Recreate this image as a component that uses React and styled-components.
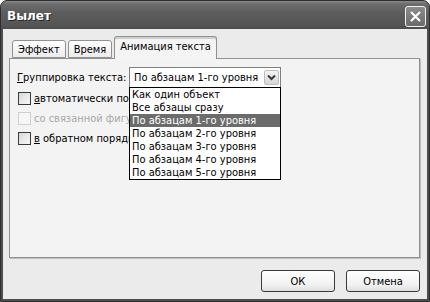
import styled, { createGlobalStyle } from "styled-components";

const GlobalStyle = createGlobalStyle`
  html, body {
    margin: 0;
    padding: 0;
    background: #ffffff;
  }
  body {
    font-family: "DejaVu Sans Condensed", "DejaVu Sans", sans-serif;
    font-size: 11px;
    color: #000;
  }
`;

const Frame = styled.div`
  width: 430px;
  height: 302px;
  box-sizing: border-box;
  display: flex;
  flex-direction: column;
  background: #4e4e4e;
  border-radius: 7px 7px 0 0;
  border: 1px solid #2e2e2e;
  overflow: hidden;
`;

const TitleBar = styled.div`
  height: 28px;
  flex-shrink: 0;
  display: flex;
  align-items: center;
  justify-content: space-between;
  padding: 0 3px 0 6px;
  background: linear-gradient(#8a8a8a 0px, #6c6c6c 3px, #5c5c5c 12px, #555555 24px, #4c4c4c 28px);
`;

const Title = styled.span`
  font-family: "DejaVu Sans", sans-serif;
  font-weight: bold;
  font-size: 12px;
  color: #ffffff;
  text-shadow: 1px 1px 0 #2a2a2a;
  margin-top: 2px;
`;

const CloseButton = styled.div`
  width: 19px;
  height: 19px;
  border: 1px solid #f2f2f2;
  border-radius: 3px;
  background: linear-gradient(#8c8c8c, #6a6a6a);
  display: flex;
  align-items: center;
  justify-content: center;
  margin-top: 2px;
`;

const Body = styled.div`
  flex: 1;
  margin: 0 2px 2px 2px;
  background: #ebebeb;
  display: flex;
  flex-direction: column;
  padding: 7px 7px 0 6px;
`;

const TabRow = styled.div`
  display: flex;
  align-items: flex-end;
  padding-left: 3px;
  height: 22px;
  position: relative;
  z-index: 1;
`;

const Tab = styled.div`
  box-sizing: border-box;
  height: ${(p) => (p.$active ? "23px" : "18px")};
  padding: ${(p) => (p.$active ? "3px 5px 0" : "2px 5px 0")};
  margin-right: ${(p) => (p.$active ? "0" : "2px")};
  margin-bottom: ${(p) => (p.$active ? "-1px" : "0")};
  border: 1px solid #919191;
  border-bottom: ${(p) => (p.$active ? "none" : "1px solid #919191")};
  border-radius: 3px 3px 0 0;
  background: ${(p) => (p.$active ? "#f4f4f4" : "linear-gradient(#ffffff, #ececec)")};
  box-shadow: ${(p) => (p.$active ? "inset 0 2px 0 #cfcfcf" : "none")};
  white-space: nowrap;
`;

const Panel = styled.div`
  height: 200px;
  box-sizing: border-box;
  background: #f3f3f3;
  border: 1px solid #919191;
  box-shadow: 1px 1px 0 #bdbdbd;
  padding: 8px 7px;
  display: flex;
  flex-direction: column;
`;

const GroupRow = styled.div`
  display: flex;
  align-items: center;
  height: 21px;
`;

const Label = styled.span`
  width: 112px;
  flex-shrink: 0;
`;

const Accel = styled.span`
  text-decoration: underline;
`;

const Combo = styled.div`
  position: relative;
  width: 152px;
  height: 21px;
  box-sizing: border-box;
  border: 1px solid #7f7f7f;
  background: #ffffff;
  display: flex;
  align-items: center;
  justify-content: space-between;
  padding: 0 1px 0 4px;
`;

const DropButton = styled.div`
  width: 15px;
  height: 15px;
  box-sizing: border-box;
  border: 1px solid #bdbdbd;
  border-radius: 2px;
  background: linear-gradient(#f4f4f4, #d6d6d6);
  display: flex;
  align-items: center;
  justify-content: center;
`;

const DropList = styled.ul`
  position: absolute;
  top: 100%;
  left: -1px;
  width: 152px;
  box-sizing: border-box;
  margin: 0;
  padding: 0;
  list-style: none;
  border: 1px solid #000000;
  background: #ffffff;
  z-index: 5;
`;

const Item = styled.li`
  height: 13px;
  line-height: 13px;
  padding-left: 2px;
  white-space: nowrap;
  background: ${(p) => (p.$selected ? "#6b6b6b" : "transparent")};
  color: ${(p) => (p.$selected ? "#ffffff" : "#000000")};
`;

const Checks = styled.div`
  display: flex;
  flex-direction: column;
  gap: 5px;
  margin-top: 3px;
  padding-left: 1px;
`;

const CheckRow = styled.label`
  display: flex;
  align-items: center;
  gap: 3px;
  height: 15px;
  color: ${(p) => (p.$disabled ? "#a8a8a8" : "#000000")};
`;

const Box = styled.span`
  width: 13px;
  height: 13px;
  box-sizing: border-box;
  border: 1px solid ${(p) => (p.$disabled ? "#cfcfcf" : "#3a3a3a")};
  background: ${(p) => (p.$disabled ? "#f6f6f6" : "linear-gradient(135deg, #d8d8d8, #f8f8f8)")};
`;

const Footer = styled.div`
  display: flex;
  justify-content: flex-end;
  gap: 11px;
  padding-top: 12px;
`;

const Button = styled.button`
  width: 74px;
  height: 22px;
  border: 1px solid #3a3a3a;
  border-radius: 3px;
  background: linear-gradient(#ffffff, #f1f1f1 70%, #dedede);
  font-family: inherit;
  font-size: 11px;
  color: #000;
  padding: 0;
`;

const levels = [
  "Как один объект",
  "Все абзацы сразу",
  "По абзацам 1-го уровня",
  "По абзацам 2-го уровня",
  "По абзацам 3-го уровня",
  "По абзацам 4-го уровня",
  "По абзацам 5-го уровня",
];

const App = () => {
  return (
    <>
      <GlobalStyle />
      <Frame>
        <TitleBar>
          <Title>Вылет</Title>
          <CloseButton>
            <svg width="13" height="13" viewBox="0 0 13 13">
              <path d="M2 2 L11 11 M11 2 L2 11" stroke="#fff" strokeWidth="2.2" />
            </svg>
          </CloseButton>
        </TitleBar>
        <Body>
          <TabRow>
            <Tab>Эффект</Tab>
            <Tab>Время</Tab>
            <Tab $active>Анимация текста</Tab>
          </TabRow>
          <Panel>
            <GroupRow>
              <Label>
                <Accel>Г</Accel>руппировка текста:
              </Label>
              <Combo>
                <span>По абзацам 1-го уровня</span>
                <DropButton>
                  <svg width="9" height="7" viewBox="0 0 9 7">
                    <path d="M1 1.5 L4.5 5 L8 1.5" stroke="#3a3a3a" strokeWidth="2" fill="none" />
                  </svg>
                </DropButton>
                <DropList>
                  {levels.map((t, i) => (
                    <Item key={t} $selected={i === 2}>
                      {t}
                    </Item>
                  ))}
                </DropList>
              </Combo>
            </GroupRow>
            <Checks>
              <CheckRow>
                <Box />
                <span>
                  <Accel>а</Accel>втоматически после
                </span>
              </CheckRow>
              <CheckRow $disabled>
                <Box $disabled />
                <span>со связанной фигурой</span>
              </CheckRow>
              <CheckRow>
                <Box />
                <span>
                  <Accel>в</Accel> обратном порядке
                </span>
              </CheckRow>
            </Checks>
          </Panel>
          <Footer>
            <Button>ОК</Button>
            <Button>Отмена</Button>
          </Footer>
        </Body>
      </Frame>
    </>
  );
};

export default App;
